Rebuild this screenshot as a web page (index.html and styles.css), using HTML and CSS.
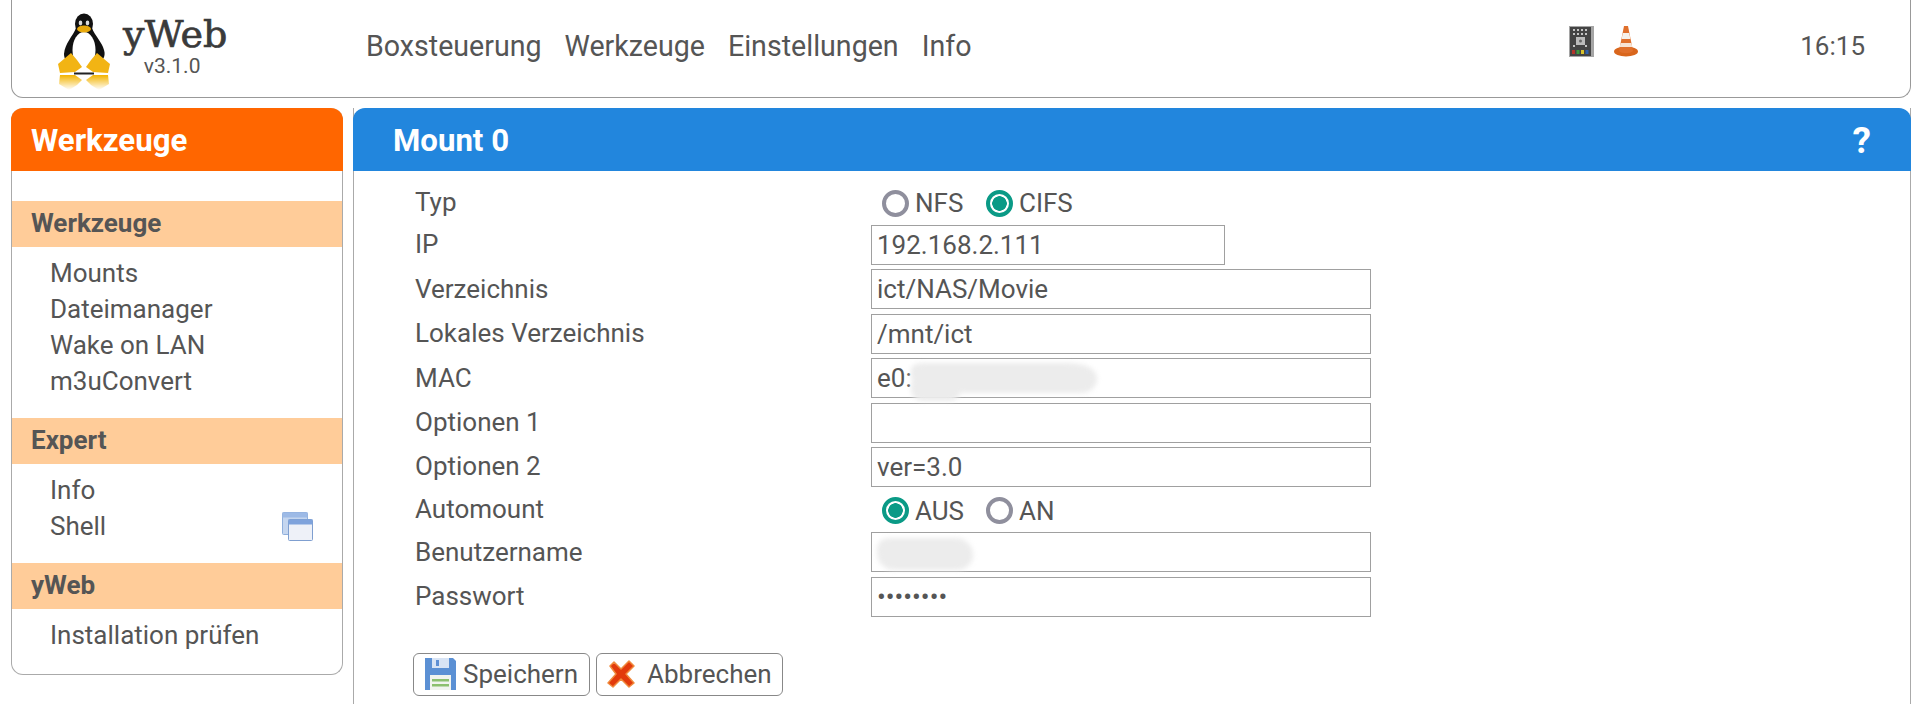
FILE: index.html
```html
<!DOCTYPE html>
<html lang="de">
<head>
    <meta charset="UTF-8">
    <title>yWeb - Mount 0</title>
    <link rel="stylesheet" href="styles.css">
</head>
<body>
    <header class="topbar">
        <div class="logo">
            <svg class="tux" viewBox="0 0 60 80" width="60" height="80">
                <defs>
                    <linearGradient id="fade" x1="0" y1="0" x2="0" y2="1">
                        <stop offset="0" stop-color="#f4b400"/>
                        <stop offset="1" stop-color="#f4b400" stop-opacity="0"/>
                    </linearGradient>
                </defs>
                <path d="M21 16C18 24 10 31 9 42C9 47 12 51 15 51L43 51C48 49 51 44 49 38C47 30 40 24 37 16Z" fill="#111"/>
                <ellipse cx="29" cy="12" rx="9" ry="10.5" fill="#111"/>
                <ellipse cx="29" cy="38" rx="11.5" ry="18" fill="#fff"/>
                <ellipse cx="25.500" cy="11" rx="1.800" ry="2.400" fill="#ddd"/>
                <ellipse cx="32.500" cy="11" rx="1.800" ry="2.400" fill="#ddd"/>
                <ellipse cx="29" cy="17" rx="7" ry="3.500" fill="#e8a90c"/>
                <path d="M16 41L22 48L27 55L20 60L5 61L3 52Z" fill="#f2b414"/>
                <path d="M42 41L36 48L31 55L38 60L53 61L55 52Z" fill="#f2b414"/>
                <rect x="19" y="60.500" width="20" height="2" fill="#222"/>
                <path d="M5 63L20 63L27 68L22 73L14 78L4 72Z" fill="url(#fade)"/>
                <path d="M53 63L38 63L31 68L36 73L44 78L54 72Z" fill="url(#fade)"/>
            </svg>
            <div class="logo-text">
                <span class="logo-name">yWeb</span>
                <span class="logo-version">v3.1.0</span>
            </div>
        </div>
        <nav class="topnav">
            <a href="#">Boxsteuerung</a>
            <a href="#">Werkzeuge</a>
            <a href="#">Einstellungen</a>
            <a href="#">Info</a>
        </nav>
        <div class="top-icons">
            <svg class="soft" viewBox="0 0 25 31" width="25" height="31">
                <rect width="25" height="31" fill="#a5a5a5"/>
                <rect x="1" y="1" width="21" height="29" fill="#444"/>
                <g fill="#c4c4c4">
                    <rect x="4" y="3" width="2" height="2"/><rect x="8" y="3" width="2" height="2"/><rect x="12" y="3" width="2" height="2"/><rect x="16" y="3" width="2" height="2"/>
                    <rect x="4" y="7" width="2" height="2"/><rect x="8" y="7" width="2" height="2"/><rect x="12" y="7" width="2" height="2"/><rect x="16" y="7" width="2" height="2"/>
                    <rect x="4" y="19" width="2" height="2"/><rect x="16" y="19" width="2" height="2"/>
                </g>
                <rect x="7" y="11" width="9" height="8" fill="#bbb"/>
                <circle cx="11.500" cy="15" r="1.500" fill="#666"/>
                <rect x="3" y="24" width="3" height="4" fill="#b3352b"/>
                <rect x="7.500" y="24" width="3" height="4" fill="#3d9a3d"/>
                <rect x="12" y="24" width="3" height="4" fill="#d8c22c"/>
                <rect x="16.500" y="24" width="3" height="4" fill="#2f62b0"/>
            </svg>
            <svg class="soft" viewBox="0 0 26 31" width="26" height="31">
                <ellipse cx="13" cy="25.500" rx="12" ry="5" fill="#d9661c"/>
                <path d="M11 0L15 0L20 25C17 28 9 28 6 25Z" fill="#e0702c"/>
                <path d="M9.800 7L16.200 7L17.400 13L8.600 13Z" fill="#f6f1ea"/>
                <path d="M7.600 17L18.400 17L19.300 21L6.700 21Z" fill="#f8e4d4"/>
            </svg>
        </div>
        <span class="clock">16:15</span>
    </header>

    <div class="main">
        <aside class="sidebar">
            <h2 class="side-title">Werkzeuge</h2>
            <h3 class="side-group">Werkzeuge</h3>
            <ul class="side-list">
                <li>Mounts</li>
                <li>Dateimanager</li>
                <li>Wake on LAN</li>
                <li>m3uConvert</li>
            </ul>
            <h3 class="side-group">Expert</h3>
            <ul class="side-list">
                <li>Info</li>
                <li class="has-icon">Shell
                    <svg class="soft" viewBox="0 0 31 29" width="31" height="29">
                        <rect x="0.500" y="0.500" width="25" height="22" rx="1" fill="#c5d6ef" stroke="#8fafdc"/>
                        <rect x="0.500" y="0.500" width="25" height="5" fill="#9dbae6"/>
                        <rect x="6.500" y="7.500" width="24" height="21" rx="1" fill="#eef1f8" stroke="#7f9fd0"/>
                        <rect x="6.500" y="7.500" width="24" height="5" fill="#7fa3dc"/>
                    </svg>
                </li>
            </ul>
            <h3 class="side-group">yWeb</h3>
            <ul class="side-list">
                <li>Installation prüfen</li>
            </ul>
        </aside>

        <section class="content">
            <div class="content-head">
                <span>Mount 0</span>
                <span class="help">?</span>
            </div>
            <form class="mount-form">
                <div class="row row-radio">
                    <label>Typ</label>
                    <div class="radios">
                        <input type="radio" name="typ" id="nfs"><label for="nfs">NFS</label>
                        <input type="radio" name="typ" id="cifs" checked><label for="cifs">CIFS</label>
                    </div>
                </div>
                <div class="row">
                    <label>IP</label>
                    <input type="text" class="short" value="192.168.2.111">
                </div>
                <div class="row">
                    <label>Verzeichnis</label>
                    <input type="text" value="ict/NAS/Movie">
                </div>
                <div class="row">
                    <label>Lokales Verzeichnis</label>
                    <input type="text" value="/mnt/ict">
                </div>
                <div class="row">
                    <label>MAC</label>
                    <div class="field">
                        <input type="text" value="e0:">
                        <span class="smudge smudge-mac"></span>
                    </div>
                </div>
                <div class="row">
                    <label>Optionen 1</label>
                    <input type="text" value="">
                </div>
                <div class="row">
                    <label>Optionen 2</label>
                    <input type="text" value="ver=3.0">
                </div>
                <div class="row row-radio">
                    <label>Automount</label>
                    <div class="radios">
                        <input type="radio" name="auto" id="aus" checked><label for="aus">AUS</label>
                        <input type="radio" name="auto" id="an"><label for="an">AN</label>
                    </div>
                </div>
                <div class="row">
                    <label>Benutzername</label>
                    <div class="field">
                        <input type="text" value="">
                        <span class="smudge smudge-user"></span>
                    </div>
                </div>
                <div class="row">
                    <label>Passwort</label>
                    <input type="password" value="abcdefgh">
                </div>
                <div class="buttons">
                    <button type="button" class="btn btn-save">
                        <svg class="soft" viewBox="0 0 32 32" width="32" height="32">
                            <path d="M1 0H29L32 3V32H1Z" fill="#5b90d4"/>
                            <rect x="8" y="0" width="17" height="10" fill="#d8e4f5"/>
                            <rect x="12" y="2" width="3" height="6" fill="#5d8fd4"/>
                            <rect x="6" y="17" width="21" height="15" fill="#f1f4ee"/>
                            <rect x="8" y="21" width="17" height="2.500" fill="#8cc06e"/>
                            <rect x="8" y="26" width="17" height="2.500" fill="#8cc06e"/>
                        </svg>
                        Speichern
                    </button>
                    <button type="button" class="btn btn-cancel">
                        <svg class="soft" viewBox="0 0 30 30" width="30" height="30">
                            <path d="M4 7L8 3L15 10L23 2L28 7L20 15L28 24L23 28L15 20L7 28L2 24L10 15Z" fill="#e23a0c" stroke="#f08a3c" stroke-width="1.500" stroke-linejoin="round"/>
                        </svg>
                        Abbrechen
                    </button>
                </div>
            </form>
        </section>
    </div>
</body>
</html>
```

FILE: styles.css
```css
* {
    box-sizing: border-box;
}
html, body {
    height: 704px;
    overflow: hidden;
}
body {
    margin: 0;
    padding: 0 9px 0 11px;
    background: white;
    font-family: Roboto, sans-serif;
    font-size: 26px;
    color: #555;
}
.soft {
    filter: blur(0.5px);
    flex-shrink: 0;
}

/* top bar */
.topbar {
    display: flex;
    align-items: center;
    height: 98px;
    border: 1px solid #999;
    border-top: none;
    border-radius: 0 0 12px 12px;
}
.logo {
    display: flex;
    width: 354px;
    padding: 5px 0 0 43px;
}
.tux {
    margin-top: 1px;
    filter: blur(0.7px);
}
.logo-text {
    display: flex;
    flex-direction: column;
    align-items: center;
    margin-left: 8px;
    padding-top: 1px;
}
.logo-name {
    font-family: "DejaVu Serif", serif;
    font-size: 38px;
    line-height: 44px;
    color: #3a3a3a;
    -webkit-text-stroke: 0.7px #3a3a3a;
}
.logo-version {
    margin-right: 6px;
    font-size: 21px;
    line-height: 20px;
}
.topnav {
    display: flex;
    gap: 23px;
    margin-top: -6px;
    font-size: 28.600px;
}
.topnav a {
    color: #555;
    text-decoration: none;
}
.top-icons {
    display: flex;
    gap: 19px;
    margin-left: auto;
    margin-right: 161px;
    margin-top: -14px;
}
.clock {
    margin-top: -6px;
    margin-right: 45px;
}

/* layout below the bar */
.main {
    display: flex;
    gap: 10px;
    margin-top: 10px;
}
.sidebar {
    width: 332px;
    height: 567px;
    border: 1px solid #aaa;
    border-top: none;
    border-radius: 12px;
}
.side-title {
    margin: 0 -1px;
    height: 63px;
    padding-left: 20px;
    background: #ff6600;
    border-radius: 12px 12px 0 0;
    color: white;
    font-size: 31.200px;
    font-weight: 700;
    line-height: 65px;
}
.side-group {
    margin: 30px 0 0;
    height: 46px;
    padding-left: 19px;
    background: #ffcc99;
    font-size: 26px;
    font-weight: 700;
    line-height: 44px;
}
.side-group + .side-list + .side-group {
    margin-top: 0;
}
.side-list {
    list-style: none;
    margin: 0;
    padding: 8px 29px 19px 38px;
}
.side-list li {
    height: 36px;
    line-height: 36px;
}
.has-icon {
    display: flex;
    justify-content: space-between;
    align-items: center;
}

/* form panel */
.content {
    flex: 1;
    height: 596px;
    border-left: 1px solid #aaa;
    border-right: 1px solid #aaa;
}
.content-head {
    display: flex;
    justify-content: space-between;
    align-items: center;
    margin: 0 -1px;
    height: 63px;
    padding: 2px 40px 0;
    background: #2286dd;
    border-radius: 12px 12px 0 0;
    color: white;
    font-size: 31.200px;
    font-weight: 700;
}
.help {
    font-size: 37px;
}
.mount-form {
    padding: 10.800px 0 0 61px;
}
.row {
    display: flex;
    align-items: center;
    height: 44.400px;
}
.row-radio {
    height: 41px;
}
.row > label {
    width: 456px;
    margin-top: -1px;
}
.row input[type="text"],
.row input[type="password"] {
    width: 500px;
    height: 40px;
    padding: 0 5px;
    border: 1px solid #a0a0a0;
    border-radius: 0;
    font-family: Roboto, sans-serif;
    font-size: 26px;
    color: #555;
    outline: none;
}
.row input.short {
    width: 354px;
}
.radios {
    display: flex;
    align-items: center;
    padding: 2px 0 0 11px;
}
.radios input {
    appearance: none;
    width: 27px;
    height: 27px;
    margin: 0 6px 0 0;
    border: 4px solid #8f8f9d;
    border-radius: 50%;
    background: white;
}
.radios input:checked {
    border-color: #0a9a86;
    background: radial-gradient(circle, #0a9a86 0 7px, white 7.500px);
}
.radios label {
    width: 71px;
}
.field {
    position: relative;
}
.smudge {
    position: absolute;
    background: #ececec;
    filter: blur(2.500px);
}
.smudge-mac {
    left: 40px;
    top: 5px;
    width: 186px;
    height: 30px;
    border-radius: 12px 30px 16px 24px / 6px 14px 14px 18px;
}
.smudge-mac::before {
    content: "";
    position: absolute;
    left: 0;
    top: 12px;
    width: 50px;
    height: 26px;
    background: #ececec;
    border-radius: 12px;
}
.smudge-user {
    left: 6px;
    top: 6px;
    width: 96px;
    height: 32px;
    border-radius: 12px 18px 16px 18px;
}
.buttons {
    display: flex;
    gap: 6px;
    margin: 34px 0 0 -2px;
}
.btn {
    display: flex;
    align-items: center;
    height: 43px;
    background: white;
    border: 1px solid #888;
    border-radius: 6px;
    font-family: Roboto, sans-serif;
    font-size: 26px;
    color: #555;
}
.btn-save {
    gap: 7px;
    padding: 0 11px 0 10px;
}
.btn-cancel {
    gap: 11px;
    padding: 0 10px 0 9px;
}
```
